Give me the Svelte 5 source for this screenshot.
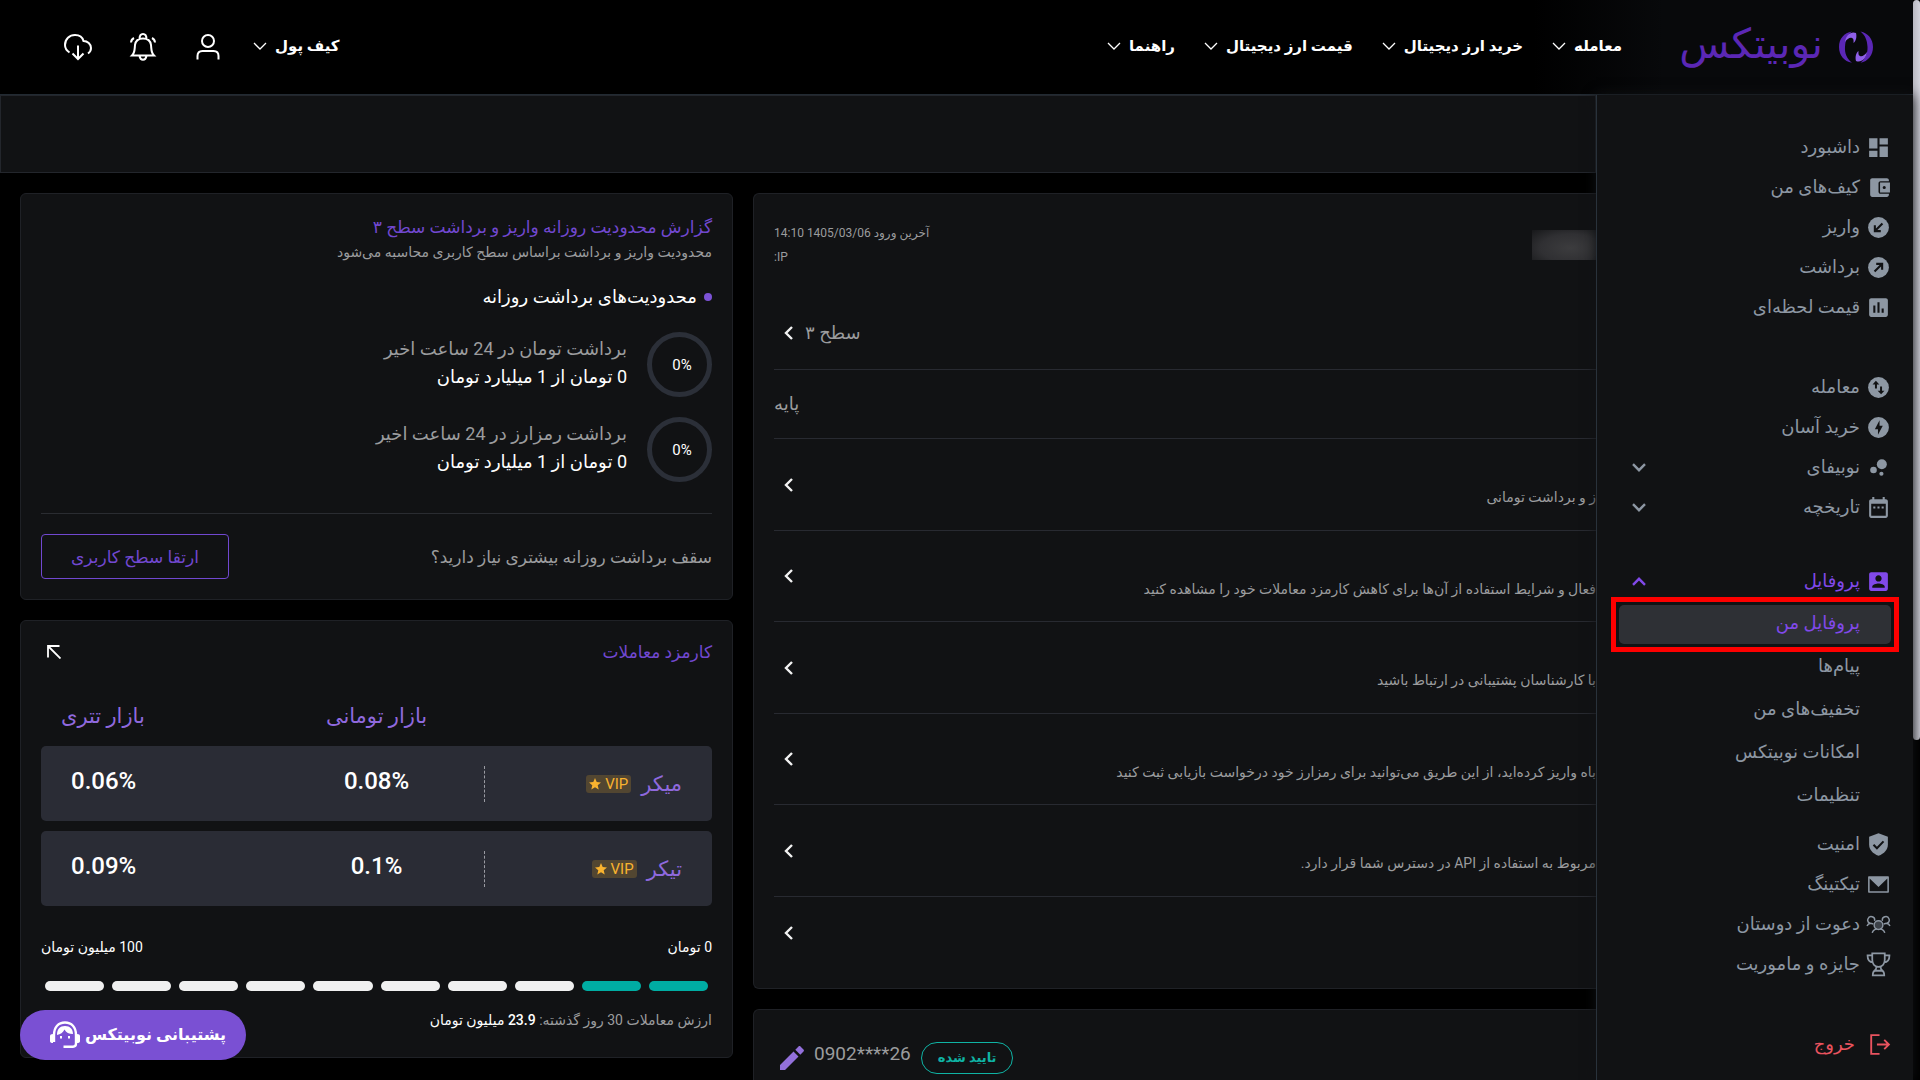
<script lang="ts">
    interface MenuItem {
        icon: string;
        label: string;
        expandable?: boolean;
    }

    const navItems = ["معامله", "خرید ارز دیجیتال", "قیمت ارز دیجیتال", "راهنما"];

    const walletMenu: MenuItem[] = [
        { icon: "dashboard", label: "داشبورد" },
        { icon: "wallet", label: "کیف‌های من" },
        { icon: "deposit", label: "واریز" },
        { icon: "withdraw", label: "برداشت" },
        { icon: "chart", label: "قیمت لحظه‌ای" },
    ];

    const tradeMenu: MenuItem[] = [
        { icon: "swap", label: "معامله" },
        { icon: "bolt", label: "خرید آسان" },
        { icon: "bubbles", label: "نوبیفای", expandable: true },
        { icon: "calendar", label: "تاریخچه", expandable: true },
    ];

    const profileMenu = [
        "پروفایل من",
        "پیام‌ها",
        "تخفیف‌های من",
        "امکانات نوبیتکس",
        "تنظیمات",
    ];

    const moreMenu: MenuItem[] = [
        { icon: "shield", label: "امنیت" },
        { icon: "mail", label: "تیکتینگ" },
        { icon: "friends", label: "دعوت از دوستان" },
        { icon: "trophy", label: "جایزه و ماموریت" },
    ];

    const services = [
        "ز و برداشت تومانی",
        "فعال و شرایط استفاده از آن‌ها برای کاهش کارمزد معاملات خود را مشاهده کنید",
        "با کارشناسان پشتیبانی در ارتباط باشید",
        "باه واریز کرده‌اید، از این طریق می‌توانید برای رمزارز خود درخواست بازیابی ثبت کنید",
        "مربوط به استفاده از API در دسترس شما قرار دارد.",
    ];

    const limits = [
        { percent: 0, title: "برداشت تومان در 24 ساعت اخیر", value: "0 تومان از 1 میلیارد تومان" },
        { percent: 0, title: "برداشت رمزارز در 24 ساعت اخیر", value: "0 تومان از 1 میلیارد تومان" },
    ];

    const fees = [
        { name: "میکر", toman: "0.08%", tether: "0.06%" },
        { name: "تیکر", toman: "0.1%", tether: "0.09%" },
    ];

    const steps = 10;
    const filledSteps = 2;

    let activePage = $state(profileMenu[0]);
    let profileOpen = $state(true);
</script>

{#snippet navArrow()}
    <svg class="nav-arrow" viewBox="0 0 14 8" aria-hidden="true">
        <path d="M1 1l6 6 6-6" fill="none" stroke="currentColor" stroke-width="1.3" />
    </svg>
{/snippet}

{#snippet chevron(up: boolean)}
    <svg class="chevron" class:up viewBox="0 0 14 9" aria-hidden="true">
        <path d="M1 1.2l6 6 6-6" fill="none" stroke="currentColor" stroke-width="2.4" />
    </svg>
{/snippet}

{#snippet backArrow()}
    <svg class="back-arrow" viewBox="0 0 9 14" aria-hidden="true">
        <path d="M8 1L2 7l6 6" fill="none" stroke="currentColor" stroke-width="2.4" />
    </svg>
{/snippet}

{#snippet icon(name: string)}
    <svg class="icon" viewBox="0 0 24 24" fill="currentColor" aria-hidden="true">
        {#if name === "dashboard"}
            <path d="M3 13h8V3H3v10zm0 8h8v-6H3v6zm10 0h8V11h-8v10zm0-18v6h8V3h-8z" />
        {:else if name === "wallet"}
            <path
                d="M22 18v1c0 1.1-.9 2-2 2H6c-1.1 0-2-.9-2-2V5c0-1.1.9-2 2-2h14c1.1 0 2 .9 2 2v1h-8c-1.1 0-2 .9-2 2v8c0 1.1.9 2 2 2h8z"
            />
            <path
                fill-rule="evenodd"
                d="M13.5 7.2H23v9.6h-9.5zM17.5 10.5a1.5 1.5 0 1 0 0 3 1.5 1.5 0 0 0 0-3z"
            />
        {:else if name === "deposit"}
            <circle cx="12" cy="12" r="10" />
            <path class="cut" d="M15.8 8.2l-7 7M8.5 9.8v5.7h5.7" />
        {:else if name === "withdraw"}
            <circle cx="12" cy="12" r="10" />
            <path class="cut" d="M8.2 15.8l7-7M9.8 8.5h5.7v5.7" />
        {:else if name === "chart"}
            <path
                d="M19 3H5c-1.1 0-2 .9-2 2v14c0 1.1.9 2 2 2h14c1.1 0 2-.9 2-2V5c0-1.1-.9-2-2-2zM9 17H7v-7h2v7zm4 0h-2V7h2v10zm4 0h-2v-4h2v4z"
            />
        {:else if name === "swap"}
            <circle cx="12" cy="12" r="10" />
            <path
                class="cut-fill"
                d="M9.5 5.5L6.3 9h2.3v4h1.9V9h2.3zM14.5 18.5l3.2-3.5h-2.3v-4h-1.9v4h-2.3z"
            />
        {:else if name === "bolt"}
            <path d="M12 2a10 10 0 1 0 0 20 10 10 0 0 0 0-20zM11.5 19v-5.3h-3L13 5v5.3h3.1z" />
        {:else if name === "bubbles"}
            <circle cx="7.2" cy="14.4" r="3.2" />
            <circle cx="14.8" cy="18" r="2" />
            <circle cx="15.2" cy="8.8" r="4.8" />
        {:else if name === "calendar"}
            <path
                d="M9 11H7v2h2v-2zm4 0h-2v2h2v-2zm4 0h-2v2h2v-2zm2-7h-1V2h-2v2H8V2H6v2H5c-1.1 0-2 .9-2 2v14c0 1.1.9 2 2 2h14c1.1 0 2-.9 2-2V6c0-1.1-.9-2-2-2zm0 16H5V8.5h14V20z"
            />
        {:else if name === "profile"}
            <path
                d="M3 5v14c0 1.1.9 2 2 2h14c1.1 0 2-.9 2-2V5c0-1.1-.9-2-2-2H5c-1.1 0-2 .9-2 2zm12 4c0 1.7-1.3 3-3 3s-3-1.3-3-3 1.3-3 3-3 3 1.3 3 3zm-9 8c0-2 4-3.1 6-3.1s6 1.1 6 3.1v1H6v-1z"
            />
        {:else if name === "shield"}
            <path d="M12 1.3L21 4.5V12c0 5-3.5 8.8-9 10.8C6.500 20.800 3 17 3 12V4.500z" />
            <path class="cut" d="M7.2 12.2l3.3 3.3 6.300-6.500" />
        {:else if name === "mail"}
            <path
                fill-rule="evenodd"
                d="M3 4h18c.6 0 1 .4 1 1v14c0 .6-.4 1-1 1H3c-.6 0-1-.4-1-1V5c0-.6.4-1 1-1zm.5 2.2v12.3h17V6.2L12 14.5z"
            />
        {:else if name === "friends"}
            <g fill="none" stroke="currentColor" stroke-width="1.4">
                <circle cx="12" cy="12.5" r="4.2" fill="#3d4249" />
                <path
                    d="M8.2 8.5a3.3 3.3 0 1 0-4.5 2.3M15.8 8.5a3.3 3.3 0 1 1 4.5 2.3M1 13.5c.5-1.5 1.8-2.5 3.5-2.7l2.5.7M23 13.5c-.5-1.5-1.8-2.5-3.5-2.7l-2.5.7M6 20c.5-2 2.2-3.5 4.5-4M18 20c-.5-2-2.2-3.5-4.5-4"
                />
            </g>
        {:else if name === "trophy"}
            <path
                fill="none"
                stroke="currentColor"
                stroke-width="1.7"
                d="M6 1.3h12v6.2c0 4-2.5 6.700-6 6.700s-6-2.700-6-6.700zM6 3.300H1.500c0 4 1.500 6.500 5.300 6.700M18 3.300h4.500c0 4-1.500 6.500-5.300 6.700M10 14.200c0 2-.5 3-2 3.800h8c-1.500-.8-2-1.800-2-3.800M6.500 22.500c0-2.500 1-4.500 2.500-4.500h6c1.500 0 2.500 2 2.500 4.500z"
            />
        {:else if name === "logout"}
            <path
                fill="none"
                stroke="currentColor"
                stroke-width="1.8"
                d="M13 3H5v18h8M10.5 12H22M17.5 7.5L22 12l-4.5 4.5"
            />
        {/if}
    </svg>
{/snippet}

{#snippet menuRow(item: MenuItem)}
    <li>
        <a class="menu-item" href="#{item.icon}">
            {@render icon(item.icon)}
            <span>{item.label}</span>
            {#if item.expandable}
                {@render chevron(false)}
            {/if}
        </a>
    </li>
{/snippet}

<div class="page" dir="rtl" lang="fa">
    <div class="scrollbar"><div class="thumb"></div></div>

    <div class="shell">
        <header class="topbar">
            <a class="logo" href="#home">
                <svg viewBox="0 0 34 32" aria-hidden="true">
                    <path
                        fill="#5b27b5"
                        d="M13 .5C5 1.5 0 8 0 16s5 14.5 13 15.8C8 28 5.5 22 6 16 6.4 9 8.5 3.5 13 .5zM21.5.5C29 2 34 8 34 16s-5 14.5-12.5 15.8C26 28 28.8 22.5 28.500 16c-.3-7-2.500-12-7-15.500z"
                    />
                    <path
                        fill="#8f5fe8"
                        d="M17 2c-5-2-10 2-11 9 2-3 5-5 7-4 2 .8 1.500 3 1.500 5 2.500-2 3.500-6 2.500-10zM17 30c5 2 10-2 11-9-2 3-5 5-7 4-2-.8-1.500-3-1.500-5-2.500 2-3.500 6-2.500 10z"
                    />
                </svg>
                <span>نوبیتکس</span>
            </a>
            <nav class="nav">
                {#each navItems as item}
                    <button type="button">{item}{@render navArrow()}</button>
                {/each}
            </nav>
            <div class="tools">
                <button type="button">کیف پول{@render navArrow()}</button>
                <button type="button" class="tool" aria-label="حساب کاربری">
                    <svg viewBox="0 0 28 28" aria-hidden="true">
                        <circle cx="14" cy="8" r="6" />
                        <path d="M3.5 26.5V23q0-5 5-5h11q5 0 5 5v3.5" />
                    </svg>
                </button>
                <button type="button" class="tool" aria-label="اعلان‌ها">
                    <svg viewBox="0 0 28 28" aria-hidden="true">
                        <path
                            d="M3 22.5h22c-3-3-2.500-6-3-10.500-.5-4-3-6.500-8-6.500s-7.500 2.500-8 6.500c-.5 4.500 0 7.500-3 10.500zM10.500 6c0-3 1-5 3.500-5s3.500 2 3.500 5M10.500 23c.5 2.500 1.800 3.800 3.500 3.800s3-1.300 3.500-3.800M2 9.500c.2-2 1-3.500 3-4.500M26 9.500c-.2-2-1-3.500-3-4.500"
                        />
                    </svg>
                </button>
                <button type="button" class="tool" aria-label="دریافت">
                    <svg viewBox="0 0 28 28" aria-hidden="true">
                        <path
                            d="M5.5 19.5C2.5 17.5 1 15 1 12 1 6 5.5 2 11 2c4 0 7.5 2 8.5 6 4 0 7.5 3 7.5 7 0 2.5-1.2 4.3-3 5.5M14 12.5V26M8.5 20.5L14 26l5.5-5.5"
                        />
                    </svg>
                </button>
            </div>
        </header>

        <div class="body">
            <aside class="sidebar">
                <ul class="group">
                    {#each walletMenu as item}
                        {@render menuRow(item)}
                    {/each}
                </ul>
                <ul class="group">
                    {#each tradeMenu as item}
                        {@render menuRow(item)}
                    {/each}
                </ul>
                <button
                    type="button"
                    class="menu-item open"
                    onclick={() => (profileOpen = !profileOpen)}
                >
                    {@render icon("profile")}
                    <span>پروفایل</span>
                    {@render chevron(profileOpen)}
                </button>
                {#if profileOpen}
                    <ul class="submenu">
                        {#each profileMenu as label}
                            <li>
                                <a
                                    href="#profile"
                                    class:active={label === activePage}
                                    onclick={() => (activePage = label)}>{label}</a
                                >
                            </li>
                        {/each}
                    </ul>
                {/if}
                <ul class="group">
                    {#each moreMenu as item}
                        {@render menuRow(item)}
                    {/each}
                </ul>
                <button type="button" class="menu-item logout">
                    {@render icon("logout")}
                    <span>خروج</span>
                </button>
            </aside>

            <main>
                <div class="banner"></div>
                <div class="columns">
                    <div class="column">
                        <section class="card account">
                            <div class="account-head">
                                <div class="redacted"></div>
                                <div class="last-login">
                                    <p>آخرین ورود 1405/03/06 14:10</p>
                                    <p>IP:</p>
                                </div>
                            </div>
                            <div class="row level">
                                <span>سطح ۳</span>
                                {@render backArrow()}
                            </div>
                            <div class="row plan"><span>پایه</span></div>
                            {#each services as text}
                                <div class="row service">
                                    <p>{text}</p>
                                    {@render backArrow()}
                                </div>
                            {/each}
                            <div class="row last">{@render backArrow()}</div>
                        </section>

                        <section class="card phone">
                            <span class="verified">تایید شده</span>
                            <span class="number" dir="ltr">0902****26</span>
                            <button type="button" class="edit" aria-label="ویرایش">
                                <svg viewBox="0 0 24 24" fill="currentColor" aria-hidden="true">
                                    <path
                                        d="M0 19v5h5l13.500-13.500-5-5zM23.500 5.500c.6-.6.6-1.500 0-2l-3-3c-.6-.6-1.500-.6-2 0l-3.200 3.200 5 5z"
                                    />
                                </svg>
                            </button>
                        </section>
                    </div>

                    <div class="column">
                        <section class="card limits">
                            <h2>گزارش محدودیت روزانه واریز و برداشت سطح ۳</h2>
                            <p class="hint">محدودیت واریز و برداشت براساس سطح کاربری محاسبه می‌شود</p>
                            <h3>محدودیت‌های برداشت روزانه</h3>
                            {#each limits as limit}
                                <div class="limit">
                                    <div class="ring"><span dir="ltr">{limit.percent}%</span></div>
                                    <div class="limit-text">
                                        <p class="muted">{limit.title}</p>
                                        <p>{limit.value}</p>
                                    </div>
                                </div>
                            {/each}
                            <div class="upgrade">
                                <span>سقف برداشت روزانه بیشتری نیاز دارید؟</span>
                                <button type="button">ارتقا سطح کاربری</button>
                            </div>
                        </section>

                        <section class="card fees">
                            <div class="fees-head">
                                <h2>کارمزد معاملات</h2>
                                <svg viewBox="0 0 14 14" aria-hidden="true">
                                    <path
                                        d="M1 12.5V1h11.5M1 1l12.5 12.5"
                                        fill="none"
                                        stroke="currentColor"
                                        stroke-width="1.8"
                                    />
                                </svg>
                            </div>
                            <table>
                                <thead>
                                    <tr>
                                        <td class="name-col"></td>
                                        <th class="toman-col" scope="col">بازار تومانی</th>
                                        <th scope="col">بازار تتری</th>
                                    </tr>
                                </thead>
                                <tbody>
                                    {#each fees as fee}
                                        <tr>
                                            <th scope="row">
                                                <div class="fee-name">
                                                    <span>{fee.name}</span>
                                                    <span class="vip" dir="ltr">
                                                        <svg viewBox="0 0 12 12" aria-hidden="true">
                                                            <path
                                                                fill="currentColor"
                                                                d="M6 0l1.7 4 4.3.4-3.3 2.8 1 4.3L6 9.2l-3.7 2.3 1-4.3L0 4.4 4.3 4z"
                                                            />
                                                        </svg>
                                                        VIP
                                                    </span>
                                                </div>
                                            </th>
                                            <td dir="ltr">{fee.toman}</td>
                                            <td dir="ltr">{fee.tether}</td>
                                        </tr>
                                    {/each}
                                </tbody>
                            </table>
                            <div class="range">
                                <span>0 تومان</span>
                                <span>100 میلیون تومان</span>
                            </div>
                            <div class="steps">
                                {#each { length: steps } as _, i}
                                    <span class:filled={i < filledSteps}></span>
                                {/each}
                            </div>
                            <p class="volume">
                                ارزش معاملات 30 روز گذشته: <strong>23.9 میلیون تومان</strong>
                            </p>
                        </section>
                    </div>
                </div>
            </main>
        </div>
    </div>

    <button type="button" class="support">
        <span>پشتیبانی نوبیتکس</span>
        <svg viewBox="0 0 30 28" aria-hidden="true">
            <path
                fill="none"
                stroke="currentColor"
                stroke-width="2.4"
                d="M4 21v-7C4 6 8.5 1.5 15 1.5S26 6 26 14v8.5c0 2-1 3.2-3 3.2h-9.5"
            />
            <path
                fill="currentColor"
                d="M0 15q0-2 3-2v9q-3 0-3-2zM30 15q0-2-3-2v9q3 0 3-2zM7 14C7 8 10 5 15 5c5 0 8 3 8 8-4 0-7-1.5-8.5-4.5C13 11.5 10.5 13.5 7 14zM10 15h2v2.5h-2zM18 15h2v2.5h-2z"
            />
        </svg>
    </button>
</div>

<style>
    :global(body) {
        background: #000;
    }

    .page {
        --panel: #111214;
        --line: #23262c;
        --muted: #9b9c9e;
        --purple: #7148d0;
        position: relative;
        display: flex;
        height: 100vh;
        overflow: hidden;
        background: #000;
        color: #fff;
        font-family: Roboto, "DejaVu Sans", sans-serif;
        font-size: 18px;
        line-height: 28px;
    }

    .page * {
        box-sizing: border-box;
    }

    h2,
    h3,
    p,
    ul {
        margin: 0;
        padding: 0;
        font-size: inherit;
        font-weight: 400;
    }

    ul {
        list-style: none;
    }

    a {
        color: inherit;
        text-decoration: none;
    }

    button {
        padding: 0;
        border: 0;
        background: none;
        color: inherit;
        font: inherit;
        cursor: pointer;
    }

    .scrollbar {
        flex: 0 0 7px;
    }

    .thumb {
        height: 740px;
        border-radius: 4px;
        background: linear-gradient(90deg, #b9b9c2, #d3d3dc);
    }

    .shell {
        display: flex;
        flex: 1;
        flex-direction: column;
        min-width: 0;
    }

    .topbar {
        display: flex;
        flex: 0 0 95px;
        align-items: center;
        padding: 0 40px 0 64px;
        border-bottom: 1px solid #222a32;
        background: linear-gradient(270deg, #08090b 0, #08090b 250px, #000 380px);
        font-size: 15px;
        font-weight: 700;
    }

    .logo {
        display: flex;
        align-items: center;
        gap: 16px;
        width: 197px;
        color: #5b27b5;
        font-size: 41px;
        font-weight: 400;
        line-height: 40px;
    }

    .logo span {
        padding-bottom: 6px;
    }

    .logo svg {
        flex: none;
        width: 34px;
        height: 32px;
    }

    .nav,
    .nav button,
    .tools,
    .tools button {
        display: flex;
        align-items: center;
    }

    .nav {
        flex: 1;
        gap: 29px;
        padding: 0 54px 2px 0;
    }

    .nav button,
    .tools button {
        gap: 8px;
        white-space: nowrap;
    }

    .tools {
        gap: 37px;
    }

    .tools button:first-child {
        padding-bottom: 2px;
        margin-left: -6px;
    }

    .nav-arrow {
        width: 14px;
        height: 8px;
    }

    .tool svg {
        width: 28px;
        height: 28px;
        fill: none;
        stroke: currentColor;
        stroke-width: 2;
    }

    .body {
        display: flex;
        flex: 1;
        min-height: 0;
    }

    .sidebar {
        z-index: 1;
        flex: 0 0 317px;
        padding: 32px 22px 0;
        border-left: 1px solid #29323b;
        background: var(--panel);
        box-shadow: 0 0 12px var(--panel);
        color: #8d97a3;
    }

    .sidebar .group {
        margin-bottom: 40px;
    }

    .sidebar .group + .menu-item {
        margin-top: -6px;
    }

    .menu-item {
        display: flex;
        align-items: center;
        gap: 6px;
        width: 100%;
        height: 40px;
    }

    .icon {
        width: 25px;
        height: 25px;
    }

    .icon .cut {
        fill: none;
        stroke: var(--panel);
        stroke-width: 2;
    }

    .icon .cut-fill {
        fill: var(--panel);
    }

    .chevron {
        width: 14px;
        height: 9px;
        margin-right: auto;
        margin-left: 13px;
    }

    .chevron.up {
        transform: rotate(180deg);
    }

    .menu-item.open {
        color: #8149ea;
    }

    .submenu {
        margin: 2px 0 6px;
    }

    .submenu li {
        padding: 2px 0;
    }

    .submenu a {
        position: relative;
        display: block;
        height: 39px;
        padding-right: 31px;
        border-radius: 5px;
        line-height: 36px;
    }

    .submenu a.active {
        background: #2e3035;
        color: #8149ea;
    }

    .submenu a.active::after {
        position: absolute;
        inset: -8px;
        border: 5px solid #fe0000;
        content: "";
    }

    .sidebar .menu-item.logout {
        gap: 11px;
        margin-top: 0;
        color: #e9535f;
    }

    main {
        flex: 1;
        min-width: 0;
        overflow: hidden;
    }

    .banner {
        height: 78px;
        border: 1px solid var(--line);
        background: var(--panel);
    }

    .columns {
        display: grid;
        grid-template-columns: 1fr 713px;
        gap: 20px;
        padding: 20px 0 0 20px;
    }

    .column {
        display: flex;
        flex-direction: column;
        gap: 20px;
        min-width: 0;
    }

    .card {
        border: 1px solid #1f2126;
        border-radius: 6px;
        background: var(--panel);
    }

    .card h2 {
        color: var(--purple);
        font-size: 17px;
    }

    .account,
    .phone {
        border-right: 0;
        border-radius: 6px 0 0 6px;
        padding-left: 20px;
        color: var(--muted);
    }

    .account-head {
        display: flex;
        justify-content: space-between;
        height: 103px;
        padding-top: 27px;
        font-size: 12px;
        line-height: 24px;
    }

    .redacted {
        width: 64px;
        height: 30px;
        margin-top: 9px;
        background: radial-gradient(ellipse at 60% 60%, #3c3c3e 0, #303033 55%, #17181a 100%);
    }

    .last-login {
        text-align: left;
    }

    .row {
        display: flex;
        align-items: center;
        justify-content: flex-end;
        border-bottom: 1px solid #282a31;
    }

    .back-arrow {
        flex: none;
        width: 9px;
        height: 14px;
        margin-left: 10px;
        color: #f2f2f2;
    }

    .level {
        gap: 12px;
        height: 73px;
    }

    .plan {
        height: 69px;
    }

    .service {
        justify-content: space-between;
        height: 92px;
    }

    .service:nth-child(odd) {
        height: 91px;
    }

    .service p {
        padding-top: 25px;
        font-size: 14px;
        white-space: nowrap;
    }

    .row.last {
        height: 71px;
        margin-bottom: 20px;
        border-bottom: 0;
    }

    .phone {
        display: flex;
        align-items: center;
        justify-content: flex-end;
        height: 98px;
        padding-left: 26px;
    }

    .verified {
        padding: 0 16px;
        border: 1px solid #0fb3a4;
        border-radius: 16px;
        color: #0fb3a4;
        font-size: 13px;
        font-weight: 700;
        line-height: 30px;
    }

    .number {
        margin: 0 10px;
        padding-bottom: 8px;
        font-size: 19px;
    }

    .edit {
        height: 28px;
        color: #9370db;
    }

    .edit svg {
        display: block;
        width: 24px;
        height: 24px;
    }

    .limits,
    .fees {
        padding: 19px 20px 20px;
    }

    .hint {
        color: var(--muted);
        font-size: 14px;
        line-height: 22px;
    }

    .limits h3 {
        display: flex;
        align-items: center;
        gap: 7px;
        margin: 20px 0 21px;
    }

    .limits h3::before {
        width: 8px;
        height: 8px;
        border-radius: 50%;
        background: #7c52d6;
        content: "";
    }

    .limit {
        display: flex;
        align-items: center;
        gap: 20px;
        margin-bottom: 20px;
    }

    .limit-text {
        padding-bottom: 4px;
    }

    .ring {
        display: flex;
        align-items: center;
        justify-content: center;
        width: 65px;
        height: 65px;
        padding-left: 5px;
        border: 5px solid #2b2f38;
        border-radius: 50%;
        font-size: 15px;
    }

    .muted {
        color: var(--muted);
    }

    .upgrade {
        display: flex;
        align-items: center;
        justify-content: space-between;
        margin-top: 31px;
        padding-top: 20px;
        border-top: 1px solid #2a2c31;
        color: var(--muted);
        font-size: 17px;
    }

    .upgrade button {
        width: 188px;
        height: 45px;
        border: 1px solid var(--purple);
        border-radius: 4px;
        color: var(--purple);
    }

    .fees-head {
        display: flex;
        align-items: center;
        justify-content: space-between;
        margin: -2px 0 17px;
    }

    .fees-head svg {
        width: 14px;
        height: 14px;
        margin-left: 6px;
    }

    table {
        width: 100%;
        border-collapse: separate;
        border-spacing: 0 10px;
        table-layout: fixed;
        font-size: 24px;
    }

    td,
    th {
        padding: 0;
        font-weight: 500;
        text-align: center;
    }

    .name-col {
        width: 34%;
    }

    .toman-col {
        width: 32%;
    }

    thead th {
        height: 43px;
        padding-top: 3px;
        color: #8f69de;
        font-size: 21px;
    }

    thead th:last-child {
        padding-left: 20px;
        text-align: left;
    }

    tbody th,
    tbody td {
        height: 75px;
        background: #2a2c35;
    }

    tbody th {
        border-radius: 0 5px 5px 0;
        font-weight: 400;
    }

    tbody td {
        padding-bottom: 6px;
    }

    tbody td:last-child {
        padding-left: 30px;
        border-radius: 5px 0 0 5px;
        text-align: left;
    }

    .fee-name {
        display: flex;
        align-items: center;
        gap: 10px;
        height: 36px;
        padding-right: 30px;
        border-left: 1px dashed #9a9ba2;
        color: #8f69de;
        font-size: 21px;
    }

    .vip {
        display: flex;
        align-items: center;
        gap: 4px;
        padding: 0 3px;
        border-radius: 3px;
        background: #524631;
        color: #f9b32f;
        font-size: 15px;
        line-height: 18px;
    }

    .vip svg {
        width: 12px;
        height: 12px;
    }

    .range,
    .volume {
        font-size: 14px;
    }

    .range {
        display: flex;
        justify-content: space-between;
        margin-top: 17px;
    }

    .steps {
        display: flex;
        gap: 8px;
        margin: 20px 4px 15px;
    }

    .steps span {
        flex: 1;
        height: 10px;
        border-radius: 5px;
        background: #f0f0f0;
    }

    .steps .filled {
        background: #00ada3;
    }

    .volume {
        margin-bottom: 3px;
        color: var(--muted);
    }

    .volume strong {
        color: #fff;
        font-weight: 500;
    }

    .support {
        position: absolute;
        bottom: 20px;
        left: 20px;
        z-index: 2;
        display: flex;
        align-items: center;
        gap: 5px;
        width: 226px;
        height: 50px;
        padding-right: 20px;
        border-radius: 25px;
        background: #7a50d3;
        font-size: 16px;
        font-weight: 700;
    }

    .support svg {
        width: 30px;
        height: 28px;
    }
</style>
